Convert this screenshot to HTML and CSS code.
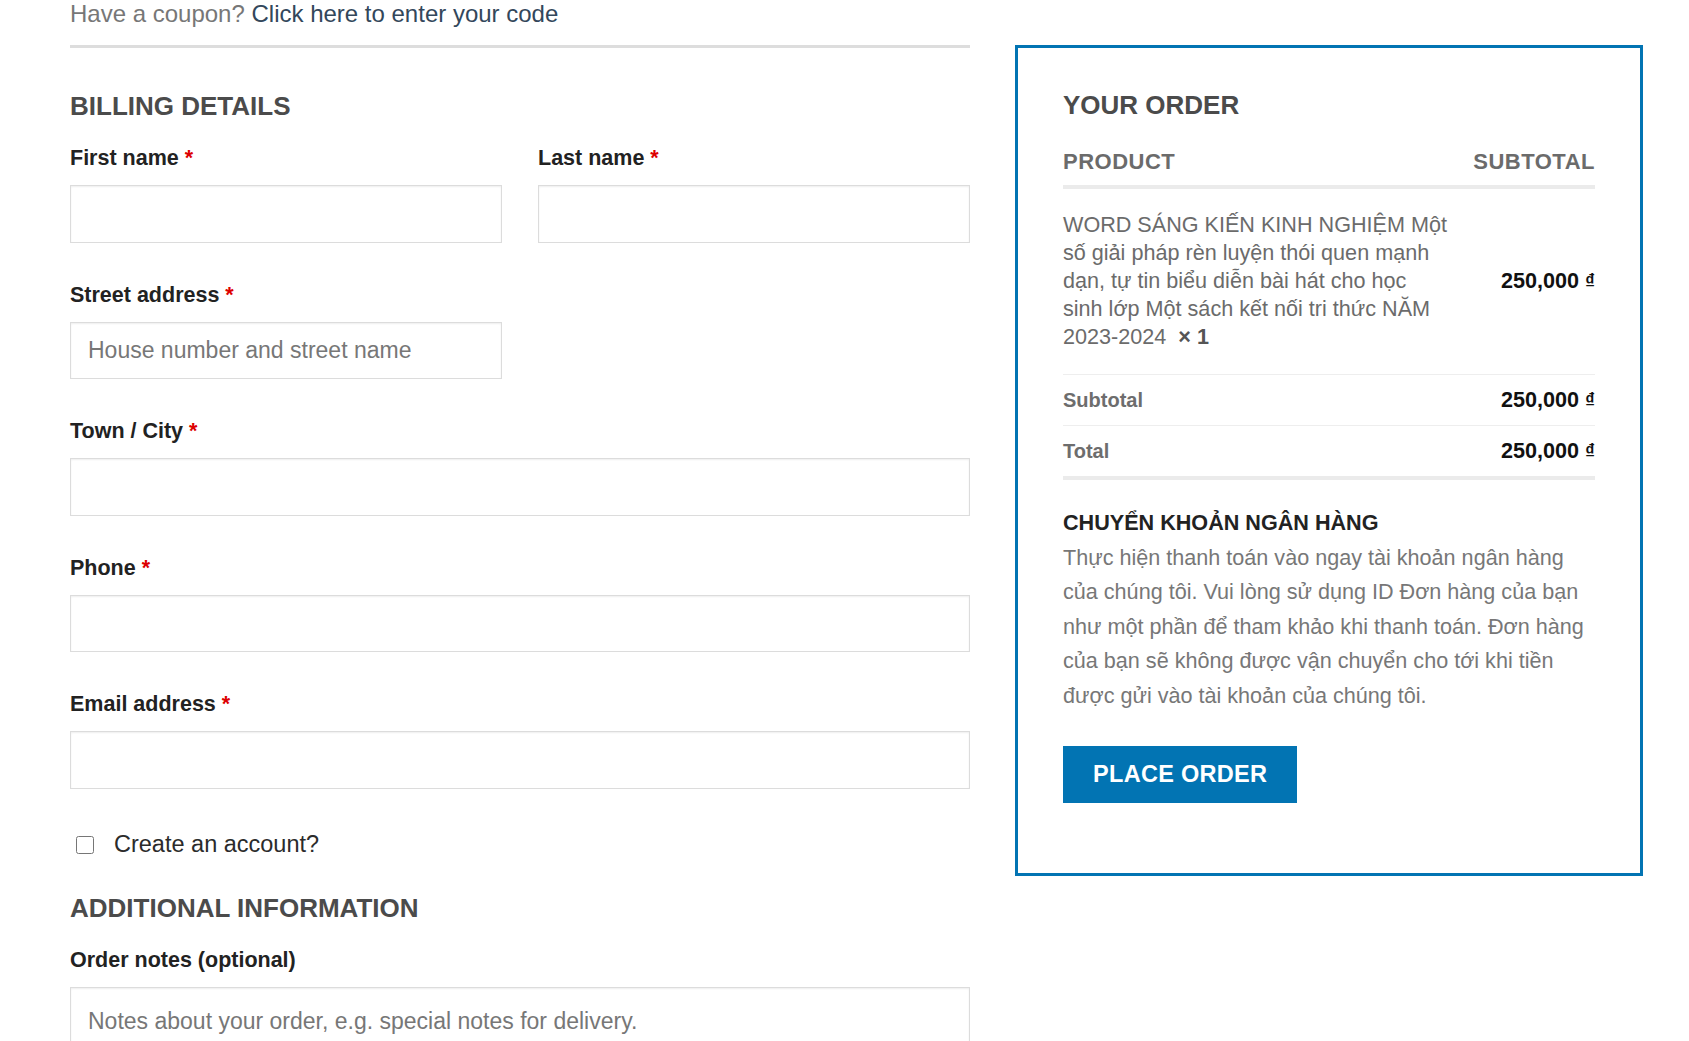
FILE: index.html
```html
<!DOCTYPE html>
<html lang="en">
<head>
  <meta charset="UTF-8">
  <meta name="viewport" content="width=device-width, initial-scale=1.0">
  <title>Checkout</title>
  <link rel="stylesheet" href="styles.css">
</head>
<body>
  <div class="checkout">

    <div class="col-billing">
      <div class="coupon-info">Have a coupon? <a href="#" class="showcoupon">Click here to enter your code</a></div>

      <h3 class="section-title">Billing details</h3>
      <div class="billing-fields">
        <p class="form-row">
          <label for="billing_first_name">First name <abbr class="required">*</abbr></label>
          <input type="text" id="billing_first_name">
        </p>
        <p class="form-row">
          <label for="billing_last_name">Last name <abbr class="required">*</abbr></label>
          <input type="text" id="billing_last_name">
        </p>
        <p class="form-row">
          <label for="billing_address_1">Street address <abbr class="required">*</abbr></label>
          <input type="text" id="billing_address_1" placeholder="House number and street name">
        </p>
        <p class="form-row form-row-wide">
          <label for="billing_city">Town / City <abbr class="required">*</abbr></label>
          <input type="text" id="billing_city">
        </p>
        <p class="form-row form-row-wide">
          <label for="billing_phone">Phone <abbr class="required">*</abbr></label>
          <input type="tel" id="billing_phone">
        </p>
        <p class="form-row form-row-wide">
          <label for="billing_email">Email address <abbr class="required">*</abbr></label>
          <input type="email" id="billing_email">
        </p>
      </div>

      <label class="create-account">
        <input type="checkbox" id="createaccount">
        <span>Create an account?</span>
      </label>

      <h3 class="section-title additional">Additional information</h3>
      <p class="form-row">
        <label for="order_comments">Order notes (optional)</label>
        <textarea id="order_comments" rows="4" placeholder="Notes about your order, e.g. special notes for delivery."></textarea>
      </p>
    </div>

    <div class="order-review">
      <h3 class="section-title">Your order</h3>
      <table class="order-table">
        <thead>
          <tr>
            <th class="product-name">Product</th>
            <th class="product-total">Subtotal</th>
          </tr>
        </thead>
        <tbody>
          <tr class="cart-item">
            <td class="product-name">WORD SÁNG KIẾN KINH NGHIỆM Một số giải pháp rèn luyện thói quen mạnh dạn, tự tin biểu diễn bài hát cho học sinh lớp Một sách kết nối tri thức NĂM 2023-2024&nbsp; <strong class="product-quantity">×&nbsp;1</strong></td>
            <td class="product-total"><span class="amount">250,000&nbsp;<span class="currency">₫</span></span></td>
          </tr>
        </tbody>
        <tfoot>
          <tr class="cart-subtotal">
            <th>Subtotal</th>
            <td><span class="amount">250,000&nbsp;<span class="currency">₫</span></span></td>
          </tr>
          <tr class="order-total">
            <th>Total</th>
            <td><span class="amount">250,000&nbsp;<span class="currency">₫</span></span></td>
          </tr>
        </tfoot>
      </table>

      <div class="payment">
        <h4 class="payment-title">Chuyển khoản ngân hàng</h4>
        <p class="payment-desc">Thực hiện thanh toán vào ngay tài khoản ngân hàng của chúng tôi. Vui lòng sử dụng ID Đơn hàng của bạn như một phần để tham khảo khi thanh toán. Đơn hàng của bạn sẽ không được vận chuyển cho tới khi tiền được gửi vào tài khoản của chúng tôi.</p>
        <button type="button" class="place-order">Place order</button>
      </div>
    </div>

  </div>
</body>
</html>
```

FILE: styles.css
```css
/* page */
body {
  margin: 0;
  font-family: "Liberation Sans", Arial, sans-serif;
  color: #3a3a3a;
  background-color: #fff;
}

.checkout {
  display: grid;
  grid-template-columns: 900px 628px;
  column-gap: 45px;
  align-items: start;
  padding-left: 70px;
}

/* coupon bar */
.coupon-info {
  font-size: 24px;
  line-height: 28px;
  color: #777;
  padding-bottom: 17px;
  border-bottom: 3px solid #dddddd;
}

.coupon-info a {
  color: #33475b;
  text-decoration: none;
}

/* headings */
.section-title {
  margin: 43px 0 20px;
  font-size: 26px;
  line-height: 1.2;
  font-weight: 700;
  text-transform: uppercase;
  color: #4b4b4b;
}

.section-title.additional {
  margin-top: 31px;
}

/* billing form */
.billing-fields {
  display: grid;
  grid-template-columns: 1fr 1fr;
  column-gap: 36px;
  row-gap: 36px;
}

.form-row {
  margin: 0;
}

.form-row-wide {
  grid-column: span 2;
}

.form-row label {
  display: block;
  margin-bottom: 11px;
  font-size: 21.5px;
  line-height: 32px;
  font-weight: 700;
  color: #222;
}

.required {
  color: #d00;
  text-decoration: none;
  border: none;
}

input[type="text"],
input[type="tel"],
input[type="email"],
textarea {
  display: block;
  box-sizing: border-box;
  width: 100%;
  height: 57.5px;
  margin: 0;
  padding: 0 17px;
  font-family: inherit;
  font-size: 23px;
  color: #444;
  background-color: #fff;
  border: 1px solid #dcdcdc;
  border-radius: 0;
  box-shadow: inset 0 1px 2px rgba(0, 0, 0, 0.07);
  outline: none;
}

textarea {
  height: 140px;
  padding: 16px 17px 8px;
  line-height: 1.5;
  resize: none;
}

::placeholder {
  color: #777;
  opacity: 1;
}

/* create account */
.create-account {
  display: flex;
  align-items: center;
  margin-top: 39px;
  height: 34px;
  font-size: 23.5px;
  color: #2b2b2b;
}

.create-account input {
  width: 18px;
  height: 18px;
  margin: 0 20px 0 6px;
}

/* order review box */
.order-review {
  margin-top: 45px;
  padding: 42px 45px 70px;
  border: 3px solid #0274b3;
}

.order-review .section-title {
  margin: 0 0 17.6px;
}

.order-table {
  width: 100%;
  border-collapse: collapse;
  table-layout: fixed;
}

.order-table th,
.order-table td {
  padding: 0;
  text-align: left;
  vertical-align: middle;
}

.order-table thead th {
  padding: 7px 0;
  font-size: 22px;
  line-height: 32px;
  letter-spacing: 0.5px;
  text-transform: uppercase;
  color: #6b6b6b;
  border-bottom: 4px solid #ebebeb;
}

.order-table thead th.product-name {
  width: 386px;
}

.order-table .product-total,
.order-table tfoot td {
  text-align: right;
}

.cart-item td {
  padding: 22px 0 23px;
  font-size: 21.6px;
  line-height: 28px;
  color: #6b6b6b;
  border-bottom: 1px solid #eeeeee;
}

.product-quantity {
  color: #555;
}

.amount {
  font-size: 21.6px;
  font-weight: 700;
  color: #111;
}

.currency {
  font-size: 0.9em;
  line-height: 1;
}

.order-table tfoot th,
.order-table tfoot td {
  height: 28px;
  padding: 11px 0;
  font-size: 21.6px;
  line-height: 28px;
  border-bottom: 1px solid #eeeeee;
}

.order-table tfoot th {
  font-size: 20px;
  color: #6d6d6d;
}

.order-table tfoot .order-total th,
.order-table tfoot .order-total td {
  border-bottom: 4px solid #ebebeb;
}

/* payment */
.payment-title {
  margin: 29px 0 4px;
  font-size: 21.6px;
  line-height: 28px;
  font-weight: 700;
  text-transform: uppercase;
  color: #222;
}

.payment-desc {
  margin: 0;
  font-size: 21.6px;
  line-height: 34.5px;
  color: #777;
}

.place-order {
  margin-top: 33px;
  height: 57px;
  padding: 0 30px;
  font-family: inherit;
  font-size: 23.5px;
  font-weight: 700;
  letter-spacing: 0.3px;
  text-transform: uppercase;
  color: #fff;
  background-color: #0274b3;
  border: none;
  border-radius: 0;
  cursor: pointer;
}
```
